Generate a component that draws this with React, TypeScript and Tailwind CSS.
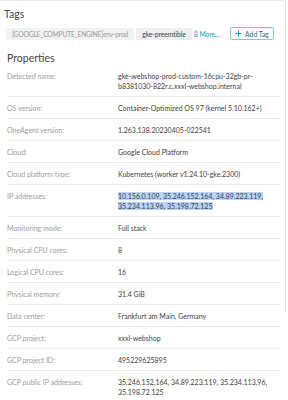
import React from "react";

const rows: { label: string; value: React.ReactNode }[] = [
  { label: "OS version:", value: "Container-Optimized OS 97 (kernel 5.10.162+)" },
  { label: "OneAgent version:", value: "1.263.138.20230405-022541" },
  { label: "Cloud:", value: "Google Cloud Platform" },
  { label: "Cloud platform type:", value: "Kubernetes (worker v1.24.10-gke.2300)" },
  {
    label: "IP addresses:",
    value: (
      <span className="bg-[#b4d5fe] [box-decoration-break:clone]">
        10.156.0.109, 35.246.152.164, 34.89.223.119,
        <br />
        35.234.113.96, 35.198.72.125
      </span>
    ),
  },
  { label: "Monitoring mode:", value: "Full stack" },
  { label: "Physical CPU cores:", value: "8" },
  { label: "Logical CPU cores:", value: "16" },
  { label: "Physical memory:", value: "31.4 GiB" },
  { label: "Data center:", value: "Frankfurt am Main, Germany" },
  { label: "GCP project:", value: "xxxl-webshop" },
  { label: "GCP project ID:", value: "495229625895" },
  {
    label: "GCP public IP addresses:",
    value: (
      <>
        35.246.152.164, 34.89.223.119, 35.234.113.96,
        <br />
        35.198.72.125
      </>
    ),
  },
];

function Row({ label, value }: { label: string; value: React.ReactNode }) {
  return (
    <div className="flex border-b border-[#ececec] py-[5.5px] text-[7px] leading-[10px]">
      <div className="w-[111px] shrink-0 text-[#9c9c9c]">{label}</div>
      <div className="text-[#3f4040]">{value}</div>
    </div>
  );
}

export default function App() {
  return (
    <div
      className="relative h-[400px] w-[288px] overflow-hidden bg-white"
      style={{ fontFamily: "Lato, 'Open Sans', sans-serif" }}
    >
      <div className="absolute left-0 top-0 h-px w-[286px] bg-[#ececec]" />
      <div className="absolute left-[285px] top-0 h-[312px] w-px bg-[#e4e4e4]" />
      <div className="pl-[4px] pt-[7px] text-[10.5px] leading-[14px] text-[#454646]">Tags</div>
      <div className="ml-[6px] mt-[6px] flex items-center leading-[12px]">
        <span className="flex h-[12px] w-[128px] shrink-0 items-center justify-center overflow-hidden whitespace-nowrap rounded-[1px] bg-[#f2f2f2] text-[6.8px] tracking-[-0.25px] text-[#9a9a9a]">
          [GOOGLE_COMPUTE_ENGINE]env-prod
        </span>
        <span className="ml-[2px] flex h-[12px] w-[56px] shrink-0 items-center justify-center whitespace-nowrap rounded-[1px] bg-[#efefef] text-[6.8px] tracking-[-0.1px] text-[#454646]">
          gke-preemtible
        </span>
        <span className="ml-[2px] w-[28px] shrink-0 whitespace-nowrap text-[6.8px] tracking-[-0.1px] text-[#00a1b2]">8 More...</span>
        <span className="ml-[8px] flex h-[13px] w-[44px] shrink-0 items-center justify-center gap-[3px] rounded-[2px] border border-[#7fcbd4] text-[#2a6f78]">
          <svg width="7" height="7" viewBox="0 0 7 7">
            <path d="M3.5 0.5v6M0.5 3.5h6" stroke="#00a1b2" strokeWidth="1" />
          </svg>
          <span className="text-[6.8px]">Add Tag</span>
        </span>
      </div>
      <div className="pl-[7px] pt-[11px] text-[10.5px] leading-[14px] text-[#454646]">Properties</div>
      <div className="ml-[7px] w-[273px]">
        <Row
          label="Detected name:"
          value={
            <>
              gke-webshop-prod-custom-16cpu-32gb-pr-
              <br />
              b8381030-822r.c.xxxl-webshop.internal
            </>
          }
        />
        {rows.map((r) => (
          <Row key={r.label} label={r.label} value={r.value} />
        ))}
      </div>
    </div>
  );
}
